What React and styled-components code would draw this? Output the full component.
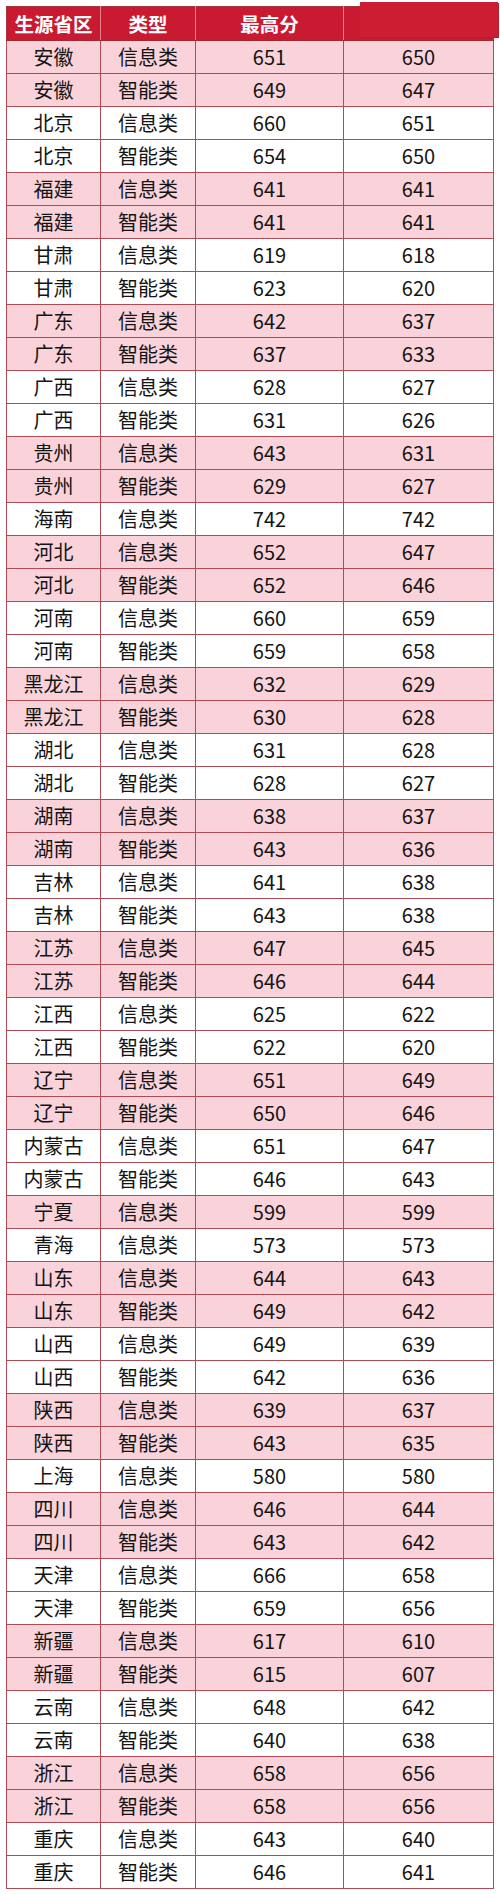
import React from 'react';
import styled, { createGlobalStyle } from 'styled-components';

const GlobalStyle = createGlobalStyle`
  html, body {
    margin: 0;
    padding: 0;
    background: #fff;
  }
  body {
    font-family: "Noto Sans CJK SC", "Noto Sans", sans-serif;
  }
`;

const Page = styled.div`
  padding: 6px 0 0 6px;
  width: 500px;
  box-sizing: border-box;
`;

const Table = styled.table`
  border-collapse: collapse;
  table-layout: fixed;
  width: 487px;
  border: 1px solid #a8343f;
`;

const HeadCell = styled.th`
  position: relative;
  height: 33px;
  padding: 0;
  background: #c91a31;
  color: #fff;
  font-size: 19.5px;
  font-weight: 700;
  text-align: center;
  border-left: 1px solid #e4808c;
  border-bottom: 1px solid #9e2a36;
  line-height: 1;
  &:first-child {
    border-left: 1px solid #a8343f;
  }
`;

// red patch pasted over the last header cell
const Patch = styled.div`
  position: absolute;
  left: 16px;
  top: -5px;
  right: -5px;
  height: 35px;
  background: #cc1d33;
  box-shadow: 1px 1px 0 #b4202f;
`;

const Row = styled.tr`
  height: 33px;
  background: ${({ $pink }) => ($pink ? '#f9d3d9' : '#ffffff')};
`;

const Cell = styled.td`
  padding: 0;
  text-align: center;
  color: #141414;
  font-size: 20px;
  line-height: 1;
  border: 1px solid #b04b55;
`;

const rows = [
  ['安徽', '信息类', 651, 650],
  ['安徽', '智能类', 649, 647],
  ['北京', '信息类', 660, 651],
  ['北京', '智能类', 654, 650],
  ['福建', '信息类', 641, 641],
  ['福建', '智能类', 641, 641],
  ['甘肃', '信息类', 619, 618],
  ['甘肃', '智能类', 623, 620],
  ['广东', '信息类', 642, 637],
  ['广东', '智能类', 637, 633],
  ['广西', '信息类', 628, 627],
  ['广西', '智能类', 631, 626],
  ['贵州', '信息类', 643, 631],
  ['贵州', '智能类', 629, 627],
  ['海南', '信息类', 742, 742],
  ['河北', '信息类', 652, 647],
  ['河北', '智能类', 652, 646],
  ['河南', '信息类', 660, 659],
  ['河南', '智能类', 659, 658],
  ['黑龙江', '信息类', 632, 629],
  ['黑龙江', '智能类', 630, 628],
  ['湖北', '信息类', 631, 628],
  ['湖北', '智能类', 628, 627],
  ['湖南', '信息类', 638, 637],
  ['湖南', '智能类', 643, 636],
  ['吉林', '信息类', 641, 638],
  ['吉林', '智能类', 643, 638],
  ['江苏', '信息类', 647, 645],
  ['江苏', '智能类', 646, 644],
  ['江西', '信息类', 625, 622],
  ['江西', '智能类', 622, 620],
  ['辽宁', '信息类', 651, 649],
  ['辽宁', '智能类', 650, 646],
  ['内蒙古', '信息类', 651, 647],
  ['内蒙古', '智能类', 646, 643],
  ['宁夏', '信息类', 599, 599],
  ['青海', '信息类', 573, 573],
  ['山东', '信息类', 644, 643],
  ['山东', '智能类', 649, 642],
  ['山西', '信息类', 649, 639],
  ['山西', '智能类', 642, 636],
  ['陕西', '信息类', 639, 637],
  ['陕西', '智能类', 643, 635],
  ['上海', '信息类', 580, 580],
  ['四川', '信息类', 646, 644],
  ['四川', '智能类', 643, 642],
  ['天津', '信息类', 666, 658],
  ['天津', '智能类', 659, 656],
  ['新疆', '信息类', 617, 610],
  ['新疆', '智能类', 615, 607],
  ['云南', '信息类', 648, 642],
  ['云南', '智能类', 640, 638],
  ['浙江', '信息类', 658, 656],
  ['浙江', '智能类', 658, 656],
  ['重庆', '信息类', 643, 640],
  ['重庆', '智能类', 646, 641],
];

// shade alternates by province group
let group = -1;
let last = '';
const shaded = rows.map((r) => {
  if (r[0] !== last) {
    group += 1;
    last = r[0];
  }
  return { cells: r, pink: group % 2 === 0 };
});

export default function App() {
  return (
    <>
      <GlobalStyle />
      <Page>
        <Table>
          <colgroup>
            <col style={{ width: 94 }} />
            <col style={{ width: 95 }} />
            <col style={{ width: 148 }} />
            <col style={{ width: 150 }} />
          </colgroup>
          <thead>
            <tr>
              <HeadCell>生源省区</HeadCell>
              <HeadCell>类型</HeadCell>
              <HeadCell>最高分</HeadCell>
              <HeadCell>
                <Patch />
              </HeadCell>
            </tr>
          </thead>
          <tbody>
            {shaded.map(({ cells, pink }, i) => (
              <Row key={i} $pink={pink}>
                {cells.map((c, j) => (
                  <Cell key={j}>{c}</Cell>
                ))}
              </Row>
            ))}
          </tbody>
        </Table>
      </Page>
    </>
  );
}
